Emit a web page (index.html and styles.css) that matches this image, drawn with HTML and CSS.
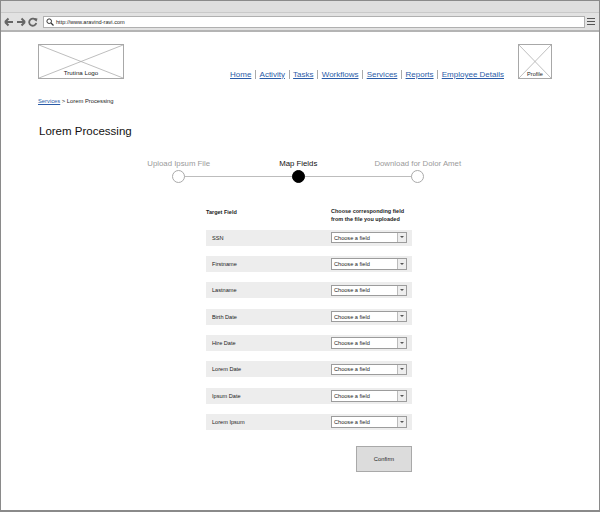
FILE: index.html
```html
<!DOCTYPE html>
<html>
<head>
<meta charset="utf-8">
<link rel="stylesheet" href="styles.css">
</head>
<body>
<div class="window">
  <div class="titlebar"></div>
  <div class="toolbar">
    <div class="navbtns">
      <svg width="34" height="10" viewBox="0 0 34 10">
        <path d="M1 5 H9 M1 5 L4.5 1.5 M1 5 L4.5 8.5" stroke="#666" stroke-width="2" fill="none"/>
        <path d="M21 5 H13 M21 5 L17.5 1.5 M21 5 L17.5 8.5" stroke="#666" stroke-width="2" fill="none"/>
        <path d="M32 3.5 A3.6 3.6 0 1 0 32.3 6" stroke="#666" stroke-width="1.8" fill="none"/>
        <path d="M30 1 L33.5 1.5 L32.5 4.8 Z" fill="#666"/>
      </svg>
    </div>
    <div class="address">
      <svg width="8" height="8" viewBox="0 0 8 8"><circle cx="3.2" cy="3.2" r="2.3" stroke="#333" stroke-width="1" fill="none"/><path d="M5 5 L7.5 7.5" stroke="#333" stroke-width="1.3"/></svg>
      <span>http://www.aravind-ravi.com</span>
    </div>
    <div class="menu"><span></span><span></span><span></span></div>
  </div>
  <div class="content">
    <div class="header">
      <div class="logo">
        <svg class="xlines" width="86" height="35" viewBox="0 0 86 35" preserveAspectRatio="none"><path d="M0 0 L86 35 M86 0 L0 35" stroke="#aaa" stroke-width="0.8"/></svg>
        <span class="logotext">Trutina Logo</span>
      </div>
      <nav class="nav">
        <a>Home</a><i></i><a>Activity</a><i></i><a>Tasks</a><i></i><a>Workflows</a><i></i><a>Services</a><i></i><a>Reports</a><i></i><a>Employee Details</a>
      </nav>
      <div class="profile">
        <svg class="xlines" width="34" height="35" viewBox="0 0 34 35" preserveAspectRatio="none"><path d="M0 0 L34 35 M34 0 L0 35" stroke="#aaa" stroke-width="0.8"/></svg>
        <span class="proftext">Profile</span>
      </div>
    </div>
    <div class="crumbs"><a>Services</a> &gt; Lorem Processing</div>
    <h1 class="title">Lorem Processing</h1>
    <div class="stepper">
      <div class="step"><div class="slabel">Upload Ipsum File</div><div class="dot"></div></div>
      <div class="step active"><div class="slabel">Map Fields</div><div class="dot"></div></div>
      <div class="step"><div class="slabel">Download for Dolor Amet</div><div class="dot"></div></div>
    </div>
    <div class="mapping">
      <div class="thead">
        <div class="c1">Target Field</div>
        <div class="c2">Choose corresponding field<br>from the file you uploaded</div>
      </div>
      <div class="rows">
        <div class="row"><div class="c1">SSN</div><div class="sel"><span>Choose a field</span><b></b></div></div>
        <div class="row"><div class="c1">Firstname</div><div class="sel"><span>Choose a field</span><b></b></div></div>
        <div class="row"><div class="c1">Lastname</div><div class="sel"><span>Choose a field</span><b></b></div></div>
        <div class="row"><div class="c1">Birth Date</div><div class="sel"><span>Choose a field</span><b></b></div></div>
        <div class="row"><div class="c1">Hire Date</div><div class="sel"><span>Choose a field</span><b></b></div></div>
        <div class="row"><div class="c1">Lorem Date</div><div class="sel"><span>Choose a field</span><b></b></div></div>
        <div class="row"><div class="c1">Ipsum Date</div><div class="sel"><span>Choose a field</span><b></b></div></div>
        <div class="row"><div class="c1">Lorem Ipsum</div><div class="sel"><span>Choose a field</span><b></b></div></div>
      </div>
      <div class="actions"><button class="confirm">Confirm</button></div>
    </div>
  </div>
</div>
</body>
</html>
```
FILE: styles.css
```css
* { box-sizing: border-box; }
html, body { margin: 0; padding: 0; background: #fff; }
body { font-family: "Liberation Sans", Arial, sans-serif; color: #222; }
.window {
  width: 600px; height: 512px;
  border: 1px solid #8a8a8a; border-bottom-width: 2px;
  display: flex; flex-direction: column; overflow: hidden;
}
.titlebar { height: 12px; background: #dedede; border-bottom: 1px solid #c9c9c9; }
.toolbar {
  height: 19px; background: #e2e2e2; border-bottom: 2px solid #b4b4b4;
  display: flex; align-items: center; padding: 0 2px 0 3px;
}
.navbtns { width: 39px; display: flex; align-items: center; }
.address {
  flex: 1; height: 12px; background: #fff; border: 1px solid #b0b0b0;
  display: flex; align-items: center; gap: 2px; padding-left: 2px;
  font-size: 5.6px; color: #222;
}
.menu { width: 12px; display: flex; flex-direction: column; align-items: center; gap: 1.5px; }
.menu span { width: 8px; height: 1.5px; background: #555; display: block; }
.content { padding: 12px 47px 0 37px; }
.header { display: flex; align-items: flex-start; }
.logo {
  width: 86px; height: 35px; border: 1px solid #a8a8a8; position: relative;
  display: flex; align-items: flex-end; justify-content: center;
}
.profile {
  width: 34px; height: 35px; border: 1px solid #a8a8a8; position: relative;
  display: flex; align-items: flex-end; justify-content: center; margin-left: 14px;
}
.xlines { position: absolute; left: 0; top: 0; width: 100%; height: 100%; }
.logotext { position: relative; font-size: 6.2px; padding-bottom: 2px; background: #fff; color: #222; }
.proftext { position: relative; font-size: 5.6px; padding-bottom: 1px; background: #fff; color: #222; }
.nav {
  margin-left: auto; display: flex; align-items: center; height: 16px; margin-top: 22px;
  font-size: 8px;
}
.nav a { color: #2b5ca8; text-decoration: underline; text-decoration-color: #2b5ca8; }
.nav i { width: 1px; height: 9px; background: #aaa; margin: 0 3.6px; display: block; }
.crumbs { margin-top: 16px; font-size: 5.8px; color: #222; }
.crumbs a { color: #2b5ca8; text-decoration: underline; }
.title { margin: 21px 0 0 1px; font-size: 11.5px; font-weight: normal; color: #111; }
.stepper {
  margin: 22px 0 0 81px; width: 359px; display: flex; position: relative;
}
.stepper::before {
  content: ""; position: absolute; left: 60px; right: 60px; top: 17px; height: 1px; background: #bdbdbd;
}
.step { width: 119.5px; display: flex; flex-direction: column; align-items: center; position: relative; }
.slabel { font-size: 7.8px; color: #9a9a9a; height: 11px; line-height: 9px; white-space: nowrap; }
.dot { width: 13px; height: 13px; border-radius: 50%; border: 1px solid #aaa; background: #fff; }
.step.active .slabel { color: #111; }
.step.active .dot { background: #000; border-color: #000; }
.mapping { margin: 25px 0 0 168px; width: 206px; }
.thead { display: flex; font-size: 5.5px; font-weight: bold; color: #222; line-height: 7.5px; height: 21.5px; }
.thead .c1 { width: 125px; padding-top: 1px; }
.rows { display: flex; flex-direction: column; gap: 10.4px; }
.row { height: 16px; background: #ededed; display: flex; align-items: center; font-size: 5.6px; color: #222; }
.row .c1 { width: 125px; padding-left: 6px; }
.sel {
  width: 76px; height: 11.5px; border: 1px solid #9c9c9c; background: #fff;
  display: flex; align-items: center; font-size: 5.6px;
}
.sel span { flex: 1; padding-left: 2px; }
.sel b {
  width: 9px; height: 100%; border-left: 1px solid #bbb; background: #eee; position: relative; display: block;
}
.sel b::after {
  content: ""; position: absolute; left: 2px; top: 3.5px;
  border-left: 2.2px solid transparent; border-right: 2.2px solid transparent; border-top: 2.6px solid #555;
}
.actions { display: flex; justify-content: flex-end; margin-top: 15.5px; }
.confirm {
  width: 56px; height: 26px; background: #dcdcdc; border: 1px solid #a9a9a9;
  font-family: "Liberation Sans", Arial, sans-serif; font-size: 5.8px; color: #222; padding: 0;
}
```
